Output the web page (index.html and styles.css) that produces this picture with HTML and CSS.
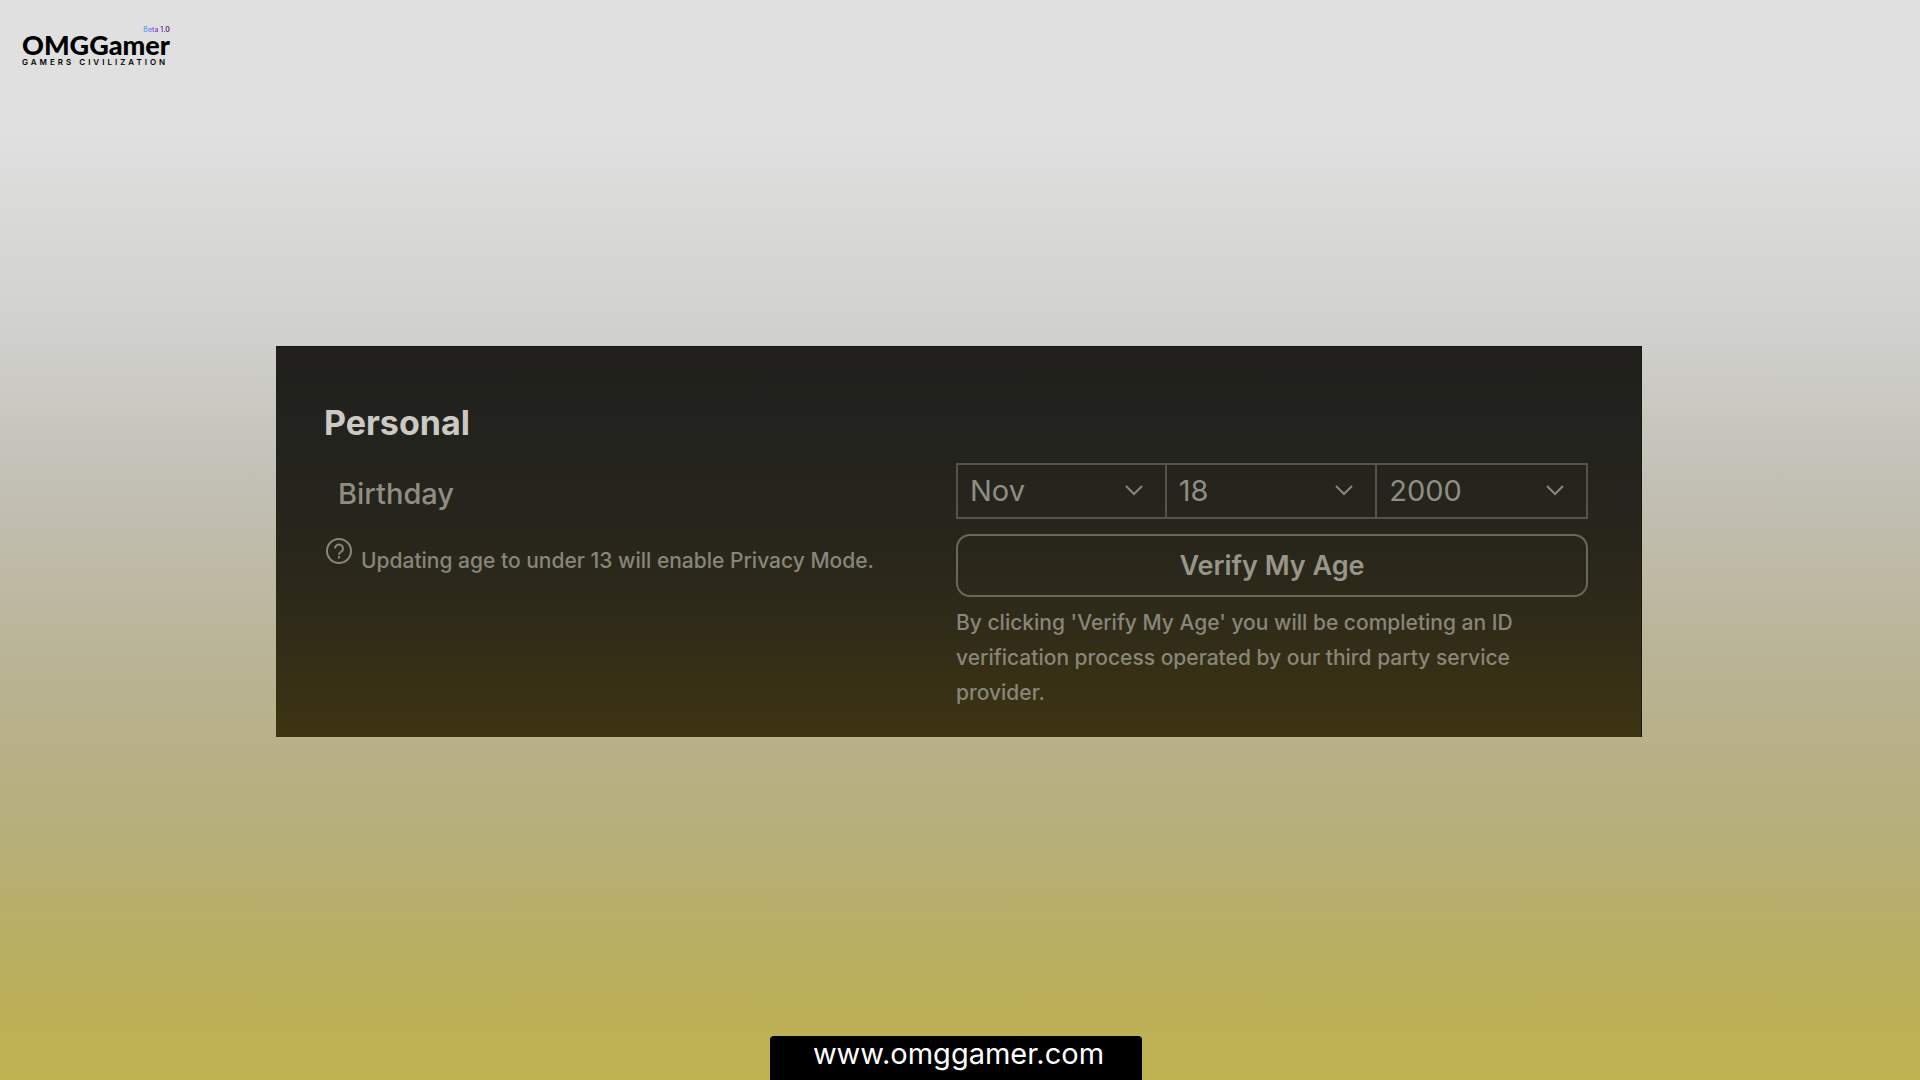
FILE: index.html
```
<!DOCTYPE html>

<html lang="en">
<head>
    <meta charset="utf-8">
    <meta name="viewport" content="width=device-width, initial-scale=1">
    <title>Personal</title>
    <link rel="stylesheet" href="styles.css">
</head>

<body>
    <header class="header">
        <div class="logo">
            <span class="logo-beta">Beta 1.0</span>
            <span class="logo-name">OMGGamer</span>
            <span class="logo-tagline">GAMERS CIVILIZATION</span>
        </div>
    </header>

    <main class="main">
        <section class="panel">
            <h1 class="panel-title">Personal</h1>

            <div class="columns">
                <div class="info">
                    <h2 class="birthday-label" id="birthdayLabel">Birthday</h2>
                    <p class="note">
                        <svg class="note-icon" viewBox="0 0 26 26" aria-hidden="true">
                            <circle cx="13" cy="13" r="12"/>
                            <path d="M9 10.500a4 4 0 1 1 6.300 3.200c-1.500 1-2.300 1.500-2.300 3"/>
                            <path d="M13 18v2.500"/>
                        </svg>
                        <span>Updating age to under 13 will enable Privacy Mode.</span>
                    </p>
                </div>

                <form class="age-form">
                    <div class="date" role="group" aria-labelledby="birthdayLabel">
                        <div class="date-part">
                            <select class="date-select" aria-label="Month">
                                <option>Nov</option>
                            </select>
                            <svg class="chevron" viewBox="0 0 18 11" aria-hidden="true"><path d="M1 1l8 8 8-8"/></svg>
                        </div>
                        <div class="date-part">
                            <select class="date-select" aria-label="Day">
                                <option>18</option>
                            </select>
                            <svg class="chevron" viewBox="0 0 18 11" aria-hidden="true"><path d="M1 1l8 8 8-8"/></svg>
                        </div>
                        <div class="date-part">
                            <select class="date-select" aria-label="Year">
                                <option>2000</option>
                            </select>
                            <svg class="chevron" viewBox="0 0 18 11" aria-hidden="true"><path d="M1 1l8 8 8-8"/></svg>
                        </div>
                    </div>

                    <button class="verify-button" type="button">Verify My Age</button>

                    <p class="terms">By clicking 'Verify My Age' you will be completing an ID verification process operated by our third party service provider.</p>
                </form>
            </div>
        </section>
    </main>

    <footer class="footer">
        <a class="site-link" href="#">www.omggamer.com</a>
    </footer>
</body>
</html>
```

FILE: styles.css
```
* {
    box-sizing: border-box;
}
body {
    display: flex;
    flex-direction: column;
    min-height: 100vh;
    margin: 0;
    background: linear-gradient(#e0e0e0 0%, #e0e0e0 12%, #d1d1ce 30%, #c2c0b5 45%, #b9b394 62%, #b6ae78 78%, #bbb05a 92%, #bfb250 100%);
    font-family: Inter, "Liberation Sans", sans-serif;
}
.header {
    height: 72px;
    padding: 16px 22px 0;
}
.logo {
    display: inline-flex;
    flex-direction: column;
    color: #000;
}
.logo-beta {
    align-self: flex-end;
    background: linear-gradient(90deg, #4fb4f5, #8a3fe0 55%, #2c1a5a);
    background-clip: text;
    color: transparent;
    font-size: 7px;
    font-weight: 600;
    line-height: 24px;
}
.logo-name {
    margin-top: -8px;
    font-family: Lato, sans-serif;
    font-size: 27px;
    font-weight: 900;
    line-height: 22px;
}
.logo-tagline {
    font-size: 8px;
    font-weight: 600;
    letter-spacing: 3px;
    line-height: 12px;
}
.main {
    display: flex;
    flex: 1;
    align-items: center;
    justify-content: center;
    padding: 0 26px 26px 24px;
}
.panel {
    width: 100%;
    max-width: 1366px;
    padding: 56px 53px 27px 48px;
    border-top: 1px solid #151512;
    border-right: 1px solid #1a1912;
    background: linear-gradient(#201f1b 0%, #22231e 20%, #26251c 45%, #2f2b19 70%, #3d3411 100%);
    color: #88867a;
}
.panel-title {
    margin: 0 0 20px;
    color: #ccc9c4;
    font-size: 34px;
    font-weight: 700;
    line-height: 40px;
}
.columns {
    display: grid;
    grid-template-columns: 1fr 1fr;
}
.birthday-label {
    margin: 13px 0 20px 14px;
    color: #908e82;
    font-size: 29px;
    font-weight: 500;
    line-height: 36px;
}
.note {
    display: flex;
    gap: 9px;
    margin: 0 0 0 2px;
    font-size: 21px;
    font-weight: 500;
    line-height: 24px;
}
.note span {
    padding-top: 17px;
}
.note-icon {
    flex: none;
    width: 26px;
    height: 26px;
    margin-top: 6px;
    fill: none;
    stroke: #88867a;
    stroke-width: 2;
}
.date {
    display: grid;
    grid-template-columns: repeat(3, 1fr);
}
.date-part {
    position: relative;
    border: 2px solid #55544a;
}
.date-part + .date-part {
    margin-left: -2px;
}
.date-select {
    width: 100%;
    height: 52px;
    padding: 0 48px 0 12px;
    border: 0;
    background: none;
    color: #908e82;
    font-family: inherit;
    font-size: 29px;
    font-weight: 400;
    appearance: none;
}
.chevron {
    position: absolute;
    top: 20px;
    right: 22px;
    width: 18px;
    height: 11px;
    fill: none;
    stroke: #88867a;
    stroke-width: 2;
    pointer-events: none;
}
.verify-button {
    width: 100%;
    height: 63px;
    margin-top: 15px;
    border: 2px solid #6a6857;
    border-radius: 14px;
    background: none;
    color: #98958a;
    font-family: inherit;
    font-size: 27px;
    font-weight: 600;
}
.terms {
    margin: 8px 0 0;
    font-size: 21px;
    font-weight: 500;
    line-height: 35px;
}
.footer {
    display: flex;
    justify-content: center;
    padding-right: 8px;
}
.site-link {
    height: 44px;
    padding: 0 38px 0 43px;
    border-radius: 4px 4px 0 0;
    background-color: #000;
    color: #fff;
    font-size: 29px;
    line-height: 36px;
    text-decoration: none;
}
```
